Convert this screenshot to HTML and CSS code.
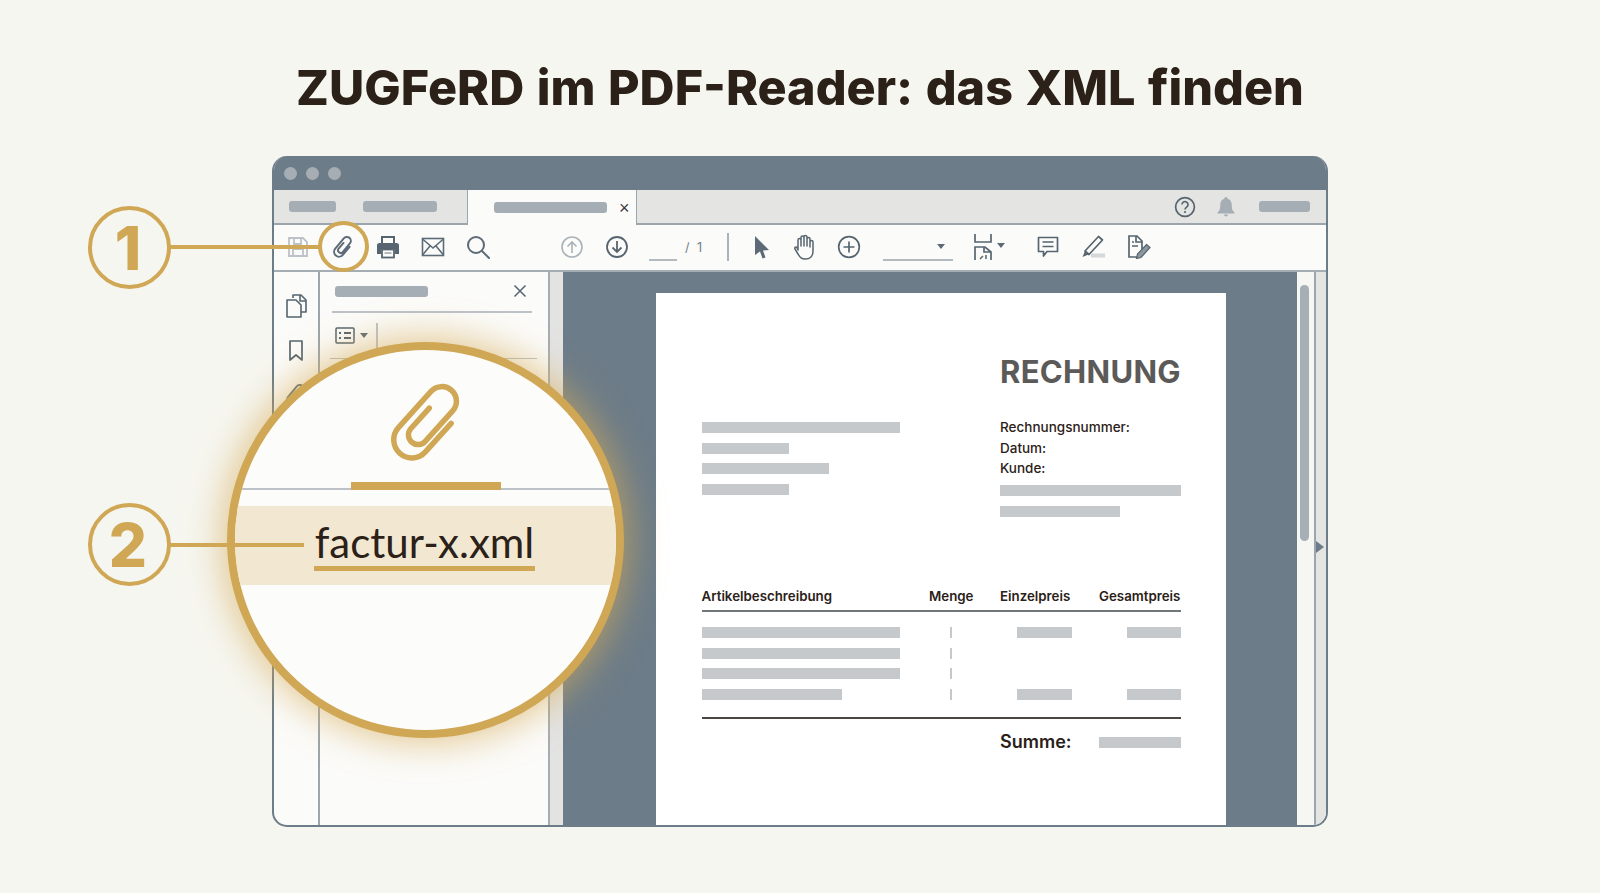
FILE: index.html
```html
<!DOCTYPE html>
<html lang="de">
<head>
<meta charset="utf-8">
<title>ZUGFeRD im PDF-Reader</title>
<link rel="stylesheet" href="styles.css">
</head>
<body>
<h1 class="title">ZUGFeRD im PDF-Reader: das XML finden</h1>
<div class="window">
  <div class="titlebar"><i class="dot"></i><i class="dot"></i><i class="dot"></i></div>
  <div class="tabs">
    <span class="pill pill-a"></span>
    <span class="pill pill-b"></span>
    <div class="tab"><span class="pill pill-c"></span><span class="tab-x">×</span></div>
    <svg class="ic-help" width="22" height="22" viewBox="0 0 22 22"><circle cx="11" cy="11" r="9.4" fill="none" stroke="#56646f" stroke-width="1.7"/><path d="M8 8.6a3 3 0 1 1 4.6 2.5c-1 .7-1.6 1.2-1.6 2.4" fill="none" stroke="#56646f" stroke-width="1.6"/><circle cx="11" cy="16" r="1.1" fill="#56646f"/></svg>
    <svg class="ic-bell" width="20" height="22" viewBox="0 0 20 22"><path d="M10 1a1.6 1.6 0 0 1 1.6 1.7C15 3.600 15.800 6.400 15.800 10c0 3.500 1 5 2.700 6.500v1H1.500v-1C3.200 15 4.200 13.500 4.200 10c0-3.600.8-6.400 4.200-7.300A1.600 1.600 0 0 1 10 1zM8 18.500h4a2 2 0 0 1-4 0z" fill="#a6aeb5"/></svg>
    <span class="pill pill-d"></span>
  </div>
  <div class="toolbar">
    <div class="tool"><svg width="22" height="22" viewBox="0 0 22 22" fill="none" stroke="#bcc2c7" stroke-width="1.8"><path d="M2 2h14l4 4v14H2z"/><path d="M7 2v6h7V2M6 20v-7h10v7"/></svg></div>
    <div class="tool"><svg width="26" height="26" viewBox="0 0 26 26"><path transform="translate(13 13) rotate(40) scale(.3) translate(-19 -39.500)" d="M35.500 25V60A16.500 16.500 0 0 1 2.500 60V15.750A13.250 13.250 0 0 1 29 15.750V53A8.750 8.750 0 0 1 11.500 53V28" fill="none" stroke="#5c6b77" stroke-width="6.500" stroke-linecap="round"/></svg></div>
    <div class="tool"><svg width="24" height="24" viewBox="0 0 24 24"><path d="M6 8V2h12v6" fill="none" stroke="#56656f" stroke-width="2"/><path d="M3.500 8h17A2.500 2.500 0 0 1 23 10.500V19h-4v-5H5v5H1v-8.500A2.500 2.500 0 0 1 3.500 8z" fill="#56656f"/><rect x="6" y="14.500" width="12" height="8" fill="#fff" stroke="#56656f" stroke-width="1.800"/><path d="M8.500 18h7" stroke="#9aa5ad" stroke-width="1.500"/></svg></div>
    <div class="tool"><svg width="24" height="20" viewBox="0 0 24 20" fill="none" stroke="#5c6b77" stroke-width="1.600"><rect x="1.500" y="1.500" width="21" height="17"/><path d="M1.500 2 12 11 22.500 2M1.500 18l7.500-9M22.500 18 15 9"/></svg></div>
    <div class="tool"><svg width="24" height="24" viewBox="0 0 24 24" fill="none" stroke="#5c6b77" stroke-width="2"><circle cx="10" cy="10" r="8"/><path d="M16 16l7 7" stroke-linecap="round"/></svg></div>
    <div class="tool tool-up"><svg width="24" height="24" viewBox="0 0 24 24" fill="none" stroke="#aab3b9" stroke-width="1.600"><circle cx="12" cy="12" r="10"/><path d="M12 18V7M7.500 11.500 12 7l4.500 4.500"/></svg></div>
    <div class="tool tool-down"><svg width="24" height="24" viewBox="0 0 24 24" fill="none" stroke="#56656f" stroke-width="1.800"><circle cx="12" cy="12" r="10"/><path d="M12 6v11M7.500 12.500 12 17l4.500-4.500"/></svg></div>
    <span class="page-input"></span>
    <span class="page-count">/ 1</span>
    <span class="tool-sep"></span>
    <div class="tool tool-cursor"><svg width="16" height="24" viewBox="0 0 16 24"><path d="M1 1l14 14-6 .5 2.500 7-3 1-2.500-7-5 3.500z" fill="#5c6b77"/></svg></div>
    <div class="tool tool-hand"><svg width="24" height="26" viewBox="0 0 24 26" fill="none" stroke="#56656f" stroke-width="1.500" stroke-linejoin="round"><path d="M5 16V6a1.500 1.500 0 0 1 3 0v6V3.500a1.500 1.500 0 0 1 3 0V12V3a1.500 1.500 0 0 1 3 0v9V5a1.500 1.500 0 0 1 3 0v8V8a1.500 1.500 0 0 1 3 0v9c0 5-3 8-7.500 8S7 23 5 20l-3-5c-.8-1.500 1-2.800 2-1.500z"/></svg></div>
    <div class="tool tool-plus"><svg width="24" height="24" viewBox="0 0 24 24" fill="none" stroke="#56656f" stroke-width="1.700"><circle cx="12" cy="12" r="10.300"/><path d="M12 6.500v11M6.500 12h11"/></svg></div>
    <div class="zoom-select"><i class="caret"></i></div>
    <div class="tool tool-fit"><svg width="20" height="26" viewBox="0 0 20 26" fill="none" stroke="#56656f" stroke-width="1.700"><path d="M2 0v8h16V0"/><path d="M2 26V13h10l6 5v8" /><path d="M11 13v5h7"/><path d="M7 25l3-3M13 25v-4" stroke-width="1.500"/></svg><i class="caret caret-fit"></i></div>
    <div class="tool tool-comment"><svg width="22" height="22" viewBox="0 0 22 22" fill="none" stroke="#56656f" stroke-width="1.700"><path d="M1.500 1.500h19v14H10l-3.500 4.500v-4.500h-5z" stroke-linejoin="round"/><path d="M5.500 6h11M5.500 10.500h11"/></svg></div>
    <div class="tool tool-pen"><svg width="26" height="24" viewBox="0 0 26 24"><path d="M17.500 1.500l4 3.500L8 19.500l-4-3.500z" fill="none" stroke="#56656f" stroke-width="1.700" stroke-linejoin="round"/><path d="M4 16l-2.500 6 6-2.500z" fill="#56656f"/><rect x="10" y="18.500" width="14" height="4" fill="#d4d8da"/></svg></div>
    <div class="tool tool-sign"><svg width="24" height="24" viewBox="0 0 24 24"><path d="M15 14V6l-5-5H2v21h8" fill="none" stroke="#56656f" stroke-width="1.700"/><path d="M9 1v6h6M5 7h2M5 11h6" fill="none" stroke="#56656f" stroke-width="1.700"/><path d="M19.500 9.500l3.500 3-9 10-4.500 1 1-4.500z" fill="#8b969e" stroke="#56656f" stroke-width="1.200"/></svg></div>
  </div>
  <div class="workspace">
    <div class="rail">
      <svg width="22" height="24" viewBox="0 0 22 24" fill="none" stroke="#56656f" stroke-width="1.600" stroke-linejoin="round"><path d="M8 4V1h8l5 5v12h-5"/><path d="M15 1v6h6"/><path d="M2 6h9l5 5v12H2z"/></svg>
      <svg class="rail-mark" width="16" height="22" viewBox="0 0 16 22" fill="none" stroke="#56656f" stroke-width="1.700" stroke-linejoin="round"><path d="M2 1h12v19l-6-5-6 5z"/></svg>
      <svg class="rail-clip" width="26" height="26" viewBox="0 0 26 26"><path transform="translate(13 13) rotate(40) scale(.3) translate(-19 -39.500)" d="M35.500 25V60A16.500 16.500 0 0 1 2.500 60V15.750A13.250 13.250 0 0 1 29 15.750V53A8.750 8.750 0 0 1 11.500 53V28" fill="none" stroke="#5c6b77" stroke-width="6.500"/></svg>
    </div>
    <aside class="panel">
      <div class="panel-head"><span class="pill pill-e"></span><svg width="14" height="14" viewBox="0 0 14 14" stroke="#56646f" stroke-width="1.500"><path d="M1.500 1.500l11 11M12.500 1.500l-11 11"/></svg></div>
      <div class="panel-tools">
        <svg width="20" height="17" viewBox="0 0 20 17" fill="none" stroke="#56656f" stroke-width="1.500"><rect x="1" y="1" width="18" height="15" rx="1"/><path d="M4 6h2M9 6h7M4 11h2M9 11h7" stroke-width="2"/></svg>
        <i class="caret"></i><span class="panel-sep"></span>
      </div>
    </aside>
    <div class="panel-strip"></div>
    <main class="viewer">
      <article class="page">
        <div class="invoice-head">
          <div class="bars"><i class="bar w198"></i><i class="bar w87"></i><i class="bar w127"></i><i class="bar w87"></i></div>
          <div class="invoice-meta">
            <h2>RECHNUNG</h2>
            <p>Rechnungsnummer:</p><p>Datum:</p><p>Kunde:</p>
            <i class="bar w181"></i><i class="bar w120"></i>
          </div>
        </div>
        <div class="row row-head"><b>Artikelbeschreibung</b><b>Menge</b><b>Einzelpreis</b><b>Gesamtpreis</b></div>
        <div class="rows">
          <div class="row"><i class="bar w198"></i><i class="tick"></i><i class="bar price"></i><i class="bar total"></i></div>
          <div class="row"><i class="bar w198"></i><i class="tick"></i></div>
          <div class="row"><i class="bar w198"></i><i class="tick"></i></div>
          <div class="row"><i class="bar w140"></i><i class="tick"></i><i class="bar price"></i><i class="bar total"></i></div>
        </div>
        <div class="row row-sum"><span></span><span></span><b>Summe:</b><i class="bar sum"></i></div>
      </article>
    </main>
    <div class="scroll"><i class="thumb"></i></div>
    <div class="right-rail"><i class="right-arrow"></i></div>
  </div>
</div>

<div class="lens">
  <svg class="lens-clip" width="80" height="88" viewBox="0 0 80 88"><path transform="translate(40 44) rotate(42) scale(1.1) translate(-19 -39.500)" d="M35.500 25V60A16.500 16.500 0 0 1 2.500 60V15.750A13.250 13.250 0 0 1 29 15.750V53A8.750 8.750 0 0 1 11.500 53V28" fill="none" stroke="#cfa755" stroke-width="5" stroke-linecap="round"/></svg>
  <div class="lens-tab"></div>
  <div class="lens-band"><span class="lens-file">factur-x.xml</span></div>
</div>

<div class="ring"></div>
<div class="lead lead-1"></div>
<div class="lead lead-2"></div>
<div class="badge badge-1">1</div>
<div class="badge badge-2">2</div>
</body>
</html>
```
FILE: styles.css
```css
* { box-sizing: border-box; }
html, body { margin: 0; height: 893px; }
body {
  position: relative;
  overflow: hidden;
  background: #f6f6f0;
  font-family: Inter, "Liberation Sans", sans-serif;
  color: #2b2118;
}
i { display: block; }

.title {
  margin: 0;
  height: 156px;
  padding-top: 58px;
  text-align: center;
  font-size: 48.500px;
  line-height: 60px;
  font-weight: 800;
  word-spacing: 1.900px;
  color: #2b2118;
}

.window {
  width: 1056px;
  height: 671px;
  margin-left: 272px;
  display: flex;
  flex-direction: column;
  border: 2px solid #6c7c88;
  border-top: 0;
  border-radius: 15px;
  background: #fbfbf9;
  overflow: hidden;
}

.titlebar {
  height: 34px;
  flex: none;
  margin: 0 -2px;
  background: #6c7c88;
  display: flex;
  align-items: center;
  gap: 9px;
  padding: 0 0 0 12px;
}
.dot { width: 13px; height: 13px; border-radius: 50%; background: #a6aeb4; }

.pill { display: block; height: 11px; border-radius: 3px; background: #a6aeb5; flex: none; }
.tabs {
  height: 35px;
  flex: none;
  display: flex;
  align-items: center;
  background: #e4e4e3;
  border-bottom: 2px solid #9aa5ad;
}
.pill-a { width: 47px; margin-left: 15px; }
.pill-b { width: 74px; margin-left: 27px; }
.tab {
  width: 170px;
  height: 35px;
  margin-left: 30px;
  align-self: flex-start;
  display: flex;
  align-items: center;
  background: #fbfbf9;
  border-left: 1px solid #9aa5ad;
  border-right: 1px solid #9aa5ad;
}
.pill-c { width: 113px; margin-left: 26px; }
.tab-x { margin-left: 12px; font-size: 18px; line-height: 18px; color: #3c3c3c; font-family: "Liberation Sans", sans-serif; }
.ic-help { margin-left: 537px; }
.ic-bell { margin-left: 20px; }
.pill-d { width: 51px; margin-left: 23px; }

.toolbar {
  height: 47px;
  flex: none;
  display: flex;
  align-items: center;
  padding: 0 0 1px 1px;
  background: #fbfbf9;
  border-bottom: 2px solid #a4adb4;
}
.tool { width: 45px; height: 44px; flex: none; display: flex; align-items: center; justify-content: center; position: relative; }
.tool-up { margin-left: 49px; }
.page-input { align-self: flex-start; width: 28px; height: 2px; margin: 34px 0 0 10px; background: #b3bac0; }
.page-count { width: 22px; margin-left: 8px; font-size: 12.500px; word-spacing: 4px; white-space: nowrap; color: #6c7c88; }
.tool-sep { width: 2px; height: 28px; margin-left: 20px; background: #aab3b9; }
.tool-cursor { margin-left: 10px; }
.tool-hand { margin-left: -2px; }
.tool-plus { margin-left: -1px; }
.zoom-select { align-self: flex-start; position: relative; width: 70px; height: 36px; margin-left: 12px; border-bottom: 2px solid #b3bac0; }
.caret { width: 0; height: 0; border: 4px solid transparent; border-top: 5px solid #5c6b77; border-bottom: 0; }
.zoom-select .caret { position: absolute; right: 8px; top: 19px; }
.tool-fit { margin-left: 7px; }
.caret-fit { position: absolute; right: 0; top: 18px; }
.tool-comment { margin-left: 20px; }
.tool-pen { margin-left: 1px; }

.workspace { flex: 1; min-height: 0; display: flex; }
.rail {
  width: 46px;
  flex: none;
  display: flex;
  flex-direction: column;
  align-items: center;
  padding-top: 22px;
  border-right: 2px solid #9aa5ad;
}
.rail-mark { margin-top: 22px; }
.rail-clip { margin-top: 20px; }
.panel { width: 228px; flex: none; background: #fbfbf9; padding: 0 11px 0 10px; }
.panel-head {
  height: 41px;
  display: flex;
  align-items: center;
  padding: 0 5px 1px 3px;
  justify-content: space-between;
  border-bottom: 2px solid #bcc2c8;
  margin: 0 5px 0 2px;
}
.pill-e { width: 93px; }
.panel-tools { display: flex; align-items: center; height: 46px; padding-left: 5px; border-bottom: 1px solid #b8bfc5; }
.panel-tools .caret { margin-left: 5px; }
.panel-sep { width: 2px; height: 26px; margin-left: 8px; background: #bcc2c8; }
.panel-strip { width: 15px; flex: none; background: #e3e3e2; border-left: 2px solid #a4adb4; }

.viewer { width: 734px; flex: none; background: #6c7c88; padding: 21px 71px 0 93px; overflow: hidden; }
.page { width: 570px; height: 540px; background: #fff; padding: 64px 45px 0 45.500px; }
.bar { height: 11px; background: #c6c9cb; }
.w198 { width: 198px; } .w87 { width: 87px; } .w127 { width: 127px; }
.w181 { width: 181px; } .w120 { width: 120px; } .w140 { width: 140px; }
.invoice-head { display: grid; grid-template-columns: 298.500px 181px; height: 229px; }
.bars { display: flex; flex-direction: column; gap: 9.700px; padding-top: 65px; }
.invoice-meta h2 { margin: 0 0 30px; font-size: 31px; line-height: 30px; font-weight: 700; letter-spacing: .3px; color: #5c5a58; white-space: nowrap; }
.invoice-meta p { margin: 0; font-size: 13.500px; line-height: 20.500px; font-weight: 500; color: #2b2118; white-space: nowrap; }
.invoice-meta .bar { margin-top: 10px; }
.invoice-meta p + .bar { margin-top: 6px; }

.row { display: grid; grid-template-columns: 227.500px 71px 99px 82px; align-items: center; }
.row-head { height: 26px; padding-bottom: 4px; border-bottom: 2px solid #6f777b; font-size: 13.300px; line-height: 20px; color: #2b2118; white-space: nowrap; }
.row-head b { font-weight: 600; }
.rows { display: flex; flex-direction: column; gap: 9.700px; margin-top: 15px; }
.tick { width: 2px; height: 11px; margin-left: 21px; background: #c6c9cb; }
.price { grid-column: 3; width: 55px; margin-left: 17px; }
.total { grid-column: 4; width: 54px; justify-self: end; }
.row-sum { margin-top: 17px; padding-top: 9px; border-top: 2px solid #4c4640; font-size: 18px; line-height: 28px; }
.row-sum b { font-weight: 600; }
.sum { width: 82px; }

.scroll { width: 17px; flex: none; background: #f6f6f2; padding: 13px 0 0 3px; }
.thumb { width: 9px; height: 256px; border-radius: 5px; background: #a6aeb6; }
.right-rail {
  flex: 1;
  display: flex;
  align-items: center;
  padding-bottom: 4px;
  background: #e4e4e3;
  border-left: 2px solid #9aa5ad;
}
.right-arrow { width: 0; height: 0; border: 6px solid transparent; border-left: 8px solid #6c7c88; border-right: 0; }

/* magnifier, lying over the window */
.lens {
  position: absolute;
  left: 227px;
  top: 342px;
  width: 397px;
  height: 396px;
  border: 8px solid #cfa755;
  border-radius: 50%;
  background: #fcfcfb;
  box-shadow: 0 0 34px 6px rgba(214, 172, 90, .62);
  overflow: hidden;
  isolation: isolate;
  display: flex;
  flex-direction: column;
  align-items: center;
}
.lens-clip { margin: 29px 0 0 2px; flex: none; }
.lens-tab { width: 150px; height: 8px; flex: none; margin-top: 15px; background: #cfa755; position: relative; }
.lens-tab::after { content: ""; position: absolute; z-index: -1; left: -200px; right: -200px; bottom: 0; height: 2px; background: #bcc2c8; }
.lens-band { width: 100%; height: 79px; flex: none; margin-top: 16px; background: #f2e8d2; display: flex; justify-content: center; align-items: flex-start; padding: 13px 2px 0 0; }
.lens-file { font-family: Lato, sans-serif; font-size: 42px; line-height: 46px; padding: 0 1px 1px; border-bottom: 5px solid #cfa755; font-weight: 400; color: #2b2118; }

.ring { position: absolute; left: 318px; top: 221px; width: 51px; height: 51px; border: 4px solid #cfa755; border-radius: 50%; }
.lead { position: absolute; left: 170px; height: 4px; background: #cfa755; }
.lead-1 { top: 245px; width: 149px; }
.lead-2 { top: 543px; width: 134px; height: 3.500px; }
.badge {
  position: absolute;
  left: 88px;
  width: 83px;
  height: 83px;
  padding-right: 3px;
  border: 4px solid #cfa755;
  border-radius: 50%;
  display: flex;
  align-items: center;
  justify-content: center;
  font-size: 60px;
  font-weight: 800;
  color: #cfa755;
}
.badge-1 { top: 206px; }
.badge-2 { top: 503px; }
```
